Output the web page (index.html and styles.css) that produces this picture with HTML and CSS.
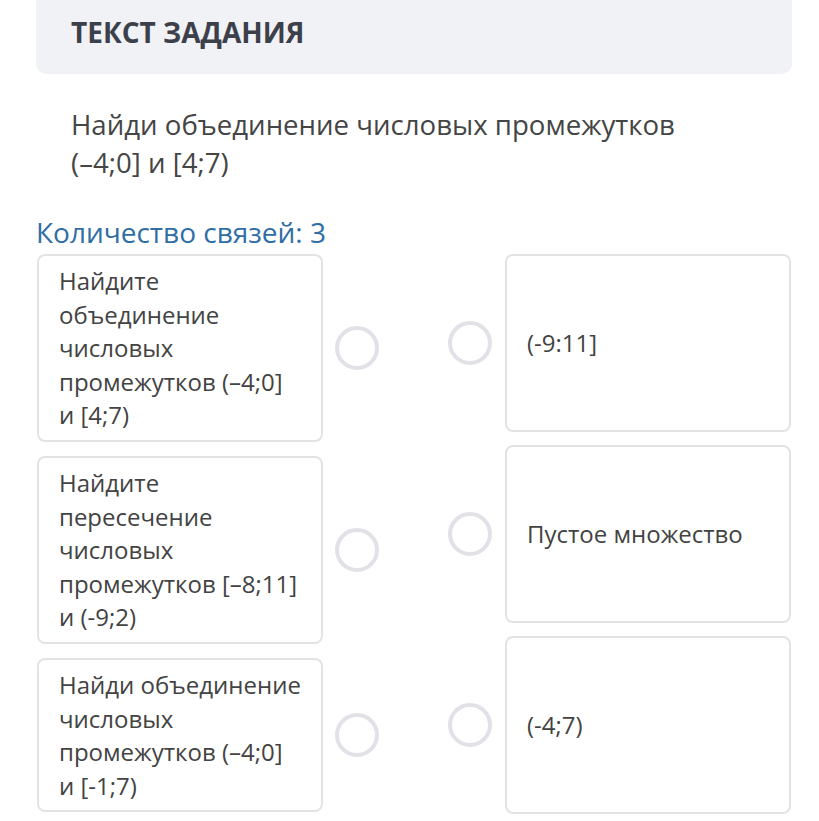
FILE: index.html
```html
<!DOCTYPE html>
<html lang="ru">
<head>
  <meta charset="UTF-8">
  <meta name="viewport" content="width=device-width, initial-scale=1.0">
  <title>Текст задания</title>
  <link rel="stylesheet" href="styles.css">
</head>
<body>
  <!-- Заголовок задания -->
  <div class="task-head">
    <h2 class="task-title">ТЕКСТ ЗАДАНИЯ</h2>
  </div>

  <p class="task-text">Найди объединение числовых промежутков (–&#8288;4;0] и [4;7)</p>

  <div class="links-count">Количество связей: 3</div>

  <div class="match">
    <div class="match-col">
      <div class="match-row">
        <div class="card card-left">Найдите объединение числовых промежутков (–&#8288;4;0] и [4;7)</div>
        <span class="dot"></span>
      </div>
      <div class="match-row">
        <div class="card card-left">Найдите пересечение числовых промежутков [–&#8288;8;11] и (-9;2)</div>
        <span class="dot"></span>
      </div>
      <div class="match-row">
        <div class="card card-left">Найди объединение числовых промежутков (–&#8288;4;0] и [-&#8288;1;7)</div>
        <span class="dot"></span>
      </div>
    </div>

    <div class="match-col match-col-right">
      <div class="match-row">
        <span class="dot"></span>
        <div class="card card-right">(-9:11]</div>
      </div>
      <div class="match-row">
        <span class="dot"></span>
        <div class="card card-right">Пустое множество</div>
      </div>
      <div class="match-row">
        <span class="dot"></span>
        <div class="card card-right">(-4;7)</div>
      </div>
    </div>
  </div>
</body>
</html>
```

FILE: styles.css
```css
body {
  font-family: "Open Sans", "Noto Sans", sans-serif;
  margin: 0;
  padding: 0;
  background-color: #ffffff;
  color: #434343;
}

.task-head {
  margin: 0 27px 0 36px;
  height: 74px;
  background-color: #f1f2f5;
  border-radius: 0 0 10px 10px;
  box-sizing: border-box;
  padding: 14px 35px 0;
}

.task-title {
  margin: 0;
  font-size: 28px;
  line-height: 36px;
  font-weight: 700;
  color: #3b404a;
}

.task-text {
  margin: 31px 100px 0 71px;
  font-size: 27.6px;
  line-height: 38px;
  color: #454545;
}

.links-count {
  margin: 32px 0 0 36px;
  font-size: 28px;
  line-height: 38px;
  color: #2f6ea5;
}

.match {
  display: flex;
  gap: 69px;
  margin: 3px 0 0 37px;
}

.match-col {
  display: flex;
  flex-direction: column;
  gap: 14px;
}

.match-row {
  display: flex;
  align-items: center;
  gap: 12px;
}

.match-col-right {
  gap: 13px;
}

.match-col-right .match-row {
  gap: 13px;
}

.card {
  width: 286px;
  box-sizing: border-box;
  border: 2px solid #e3e3e6;
  border-radius: 8px;
  font-size: 24px;
  line-height: 33.6px;
  color: #434343;
}

.card-left {
  padding: 8px 20px 8px 20px;
}

.card-right {
  height: 178px;
  display: flex;
  align-items: center;
  padding: 0 20px;
}

.dot {
  width: 44px;
  height: 44px;
  box-sizing: border-box;
  border: 4px solid #e1e1e7;
  border-radius: 50%;
  flex-shrink: 0;
}
```
